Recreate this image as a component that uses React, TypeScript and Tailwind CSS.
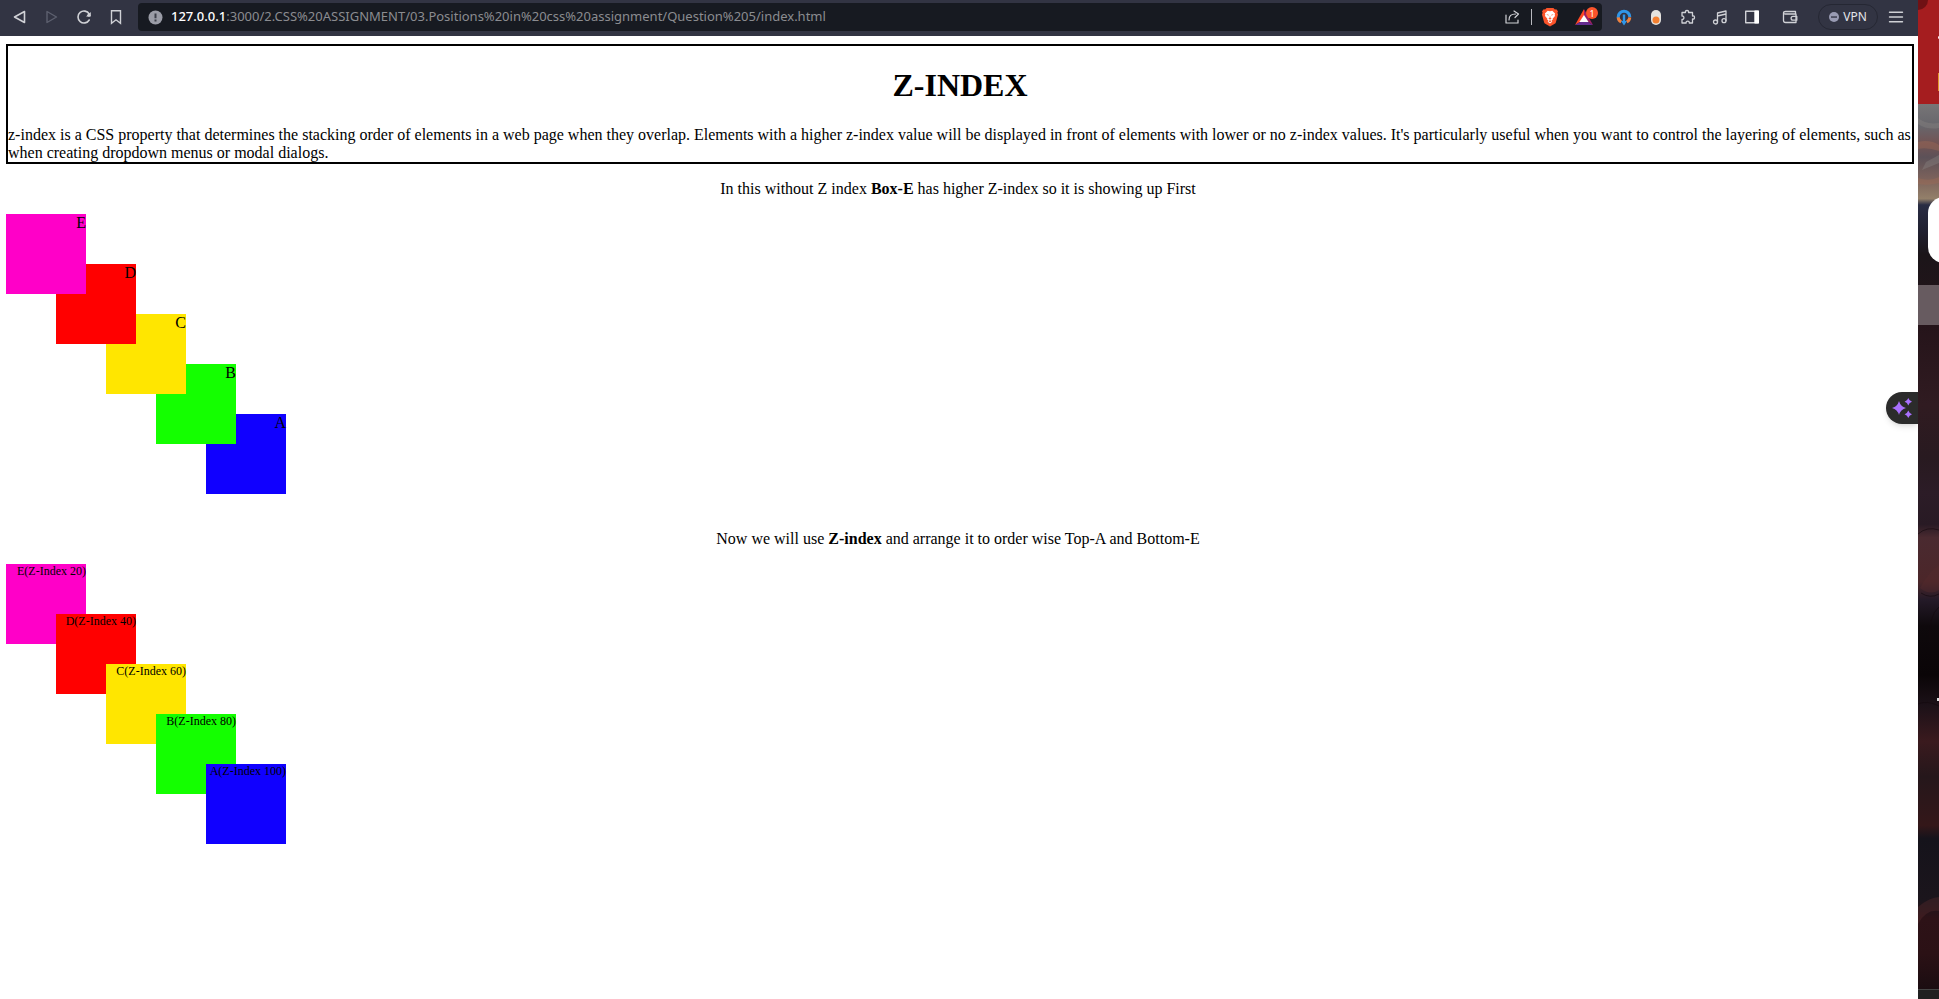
import { useState, type ReactNode } from "react";

const BOXES = [
  { name: "A", color: "bg-[#1000ff]", place: "left-[200px] top-[200px]", index: 100, layer: "z-[100]" },
  { name: "B", color: "bg-[#14ff00]", place: "left-[150px] top-[150px]", index: 80, layer: "z-[80]" },
  { name: "C", color: "bg-[#ffe600]", place: "left-[100px] top-[100px]", index: 60, layer: "z-[60]" },
  { name: "D", color: "bg-[#ff0000]", place: "left-[50px] top-[50px]", index: 40, layer: "z-40" },
  { name: "E", color: "bg-[#ff00c8]", place: "left-0 top-0", index: 20, layer: "z-20" },
];

function ToolButton({ label, children, disabled }: { label: string; children: ReactNode; disabled?: boolean }) {
  return (
    <button
      type="button"
      aria-label={label}
      disabled={disabled}
      className="flex h-7 w-8 shrink-0 items-center justify-center text-[#d0d1d6] disabled:text-[#5d606f]"
    >
      {children}
    </button>
  );
}

function Stroke({ children, w = 1.4 }: { children: ReactNode; w?: number }) {
  return (
    <svg width="16" height="16" viewBox="0 0 16 16" fill="none" stroke="currentColor" strokeWidth={w} strokeLinejoin="round" strokeLinecap="round">
      {children}
    </svg>
  );
}

function BraveLion() {
  return (
    <svg width="18" height="20" viewBox="0 0 18 20">
      <path d="M5.6 1h6.8l1.5 1.6 1.4-.3 1.7 2-.6 1.5.6 1.8-2.1 7.6q-.3 1-1.2 1.6L9 19.400l-4.700-2.600q-.9-.6-1.200-1.600L1 7.600l.6-1.800L1 4.300l1.700-2 1.400.3z" fill="#fb542b" />
      <path d="M9 4.200l2.300-.5 2.800 2.900-.4 1.200.3 1.100-2.400 2.900.2 1-1.300.7.8 1.300L9 16.600l-2.300-1.800.8-1.300-1.300-.7.200-1L4 8.900l.3-1.100-.4-1.200 2.800-2.900z" fill="#fff" />
      <path d="M5.300 7.300l2.300.5-.2 1zM12.700 7.300l-2.300.5.200 1zM9 8.500l.5 2.400 1.200.8L9 12.600l-1.700-.9 1.200-.8zM7.400 14.200L9 13.300l1.600.9L9 15.200z" fill="#fb542b" />
    </svg>
  );
}

function RewardsTriangle() {
  return (
    <svg width="20" height="18" viewBox="0 0 20 18">
      <path d="M10 1L1 17l5-3 4-6z" fill="#ff4724" />
      <path d="M1 17h18l-4.500-3H6z" fill="#662d91" />
      <path d="M10 1l9 16-4.500-3L10 8z" fill="#9e1f63" />
      <path d="M10 7L14.600 14H5.400z" fill="#fff" />
    </svg>
  );
}

function Toolbar() {
  const [path, setPath] = useState(
    ":3000/2.CSS%20ASSIGNMENT/03.Positions%20in%20css%20assignment/Question%205/index.html"
  );
  return (
    <header className="flex h-9 items-center bg-[#323443] pr-1.5 pb-0.5 pl-1 font-['Noto_Sans','Open_Sans',sans-serif]">
      <ToolButton label="Back">
        <Stroke w={1.6}><path d="M12.500 2.500v11L2.500 8z" /></Stroke>
      </ToolButton>
      <ToolButton label="Forward" disabled>
        <Stroke w={1.4}><path d="M3 2.500v11L12.500 8z" /></Stroke>
      </ToolButton>
      <ToolButton label="Reload">
        <Stroke w={1.600}>
          <path d="M13.200 5A6 6 0 1 0 13.200 11" />
          <path d="M14.800 3v4.500H10z" fill="currentColor" stroke="none" />
          <circle cx="12.800" cy="6.200" r="1.500" fill="currentColor" stroke="none" />
        </Stroke>
      </ToolButton>
      <ToolButton label="Bookmark this tab">
        <Stroke><path d="M3.500 1.700h9v12.600L8 10.800l-4.500 3.500z" strokeLinejoin="miter" /></Stroke>
      </ToolButton>

      <div className="ml-1.5 flex h-7 min-w-0 flex-1 items-center rounded-[4px] bg-[#171a21] pr-0.5 pl-2.5 text-[13px]">
        <button type="button" aria-label="View site information" className="mr-2 shrink-0">
          <svg width="15" height="15" viewBox="0 0 15 15">
            <circle cx="7.500" cy="7.500" r="7" fill="#9a9ca6" />
            <path d="M6.500 3.500h2v4.700h-2zM6.500 9.500h2v2h-2z" fill="#3c3f49" />
          </svg>
        </button>
        <label htmlFor="address" className="font-medium text-white">127.0.0.1</label>
        <input
          id="address"
          value={path}
          onChange={(e) => setPath(e.target.value)}
          spellCheck={false}
          className="min-w-0 flex-1 bg-transparent text-[#8b8c90] outline-none"
        />
        <ToolButton label="Share this page">
          <Stroke w={1.2}>
            <path d="M1 6v8h12v-3M4 11q0-6 6.500-6M9 2l4.500 3-3.500 3.500" />
          </Stroke>
        </ToolButton>
        <span className="mx-0.5 h-4 w-px bg-[#b9bac0]" />
        <ToolButton label="Brave Shields"><BraveLion /></ToolButton>
        <button type="button" aria-label="Brave Rewards" className="relative ml-0.5 flex h-7 w-8 items-center justify-center">
          <RewardsTriangle />
          <span className="absolute top-1 right-0.5 flex size-3 items-center justify-center rounded-full bg-[#fb542b] text-[9px] leading-none text-white">1</span>
        </button>
      </div>

      <div className="flex items-center pl-1.5">
        <ToolButton label="Download manager">
          <svg width="16" height="17" viewBox="0 0 16 17" fill="none">
            <path d="M3.500 11.500A5.900 5.900 0 0 1 2.200 8 5.800 5.800 0 0 1 13.800 8" stroke="#2f96e8" strokeWidth="3" />
            <path d="M2.200 8.300a6 6 0 0 0 3 4.700M13.800 8.300a6 6 0 0 1-3 4.700" stroke="#f0803c" strokeWidth="3" />
            <path d="M6.800 5.500h2.400V12h1.800L8 16.500 5 12h1.800z" fill="#2f96e8" />
          </svg>
        </ToolButton>
        <ToolButton label="Dark mode switch">
          <svg width="12" height="17" viewBox="0 0 12 17">
            <rect x="1" y="1" width="10" height="15" rx="5" fill="#e5e3df" />
            <circle cx="6" cy="11" r="3.500" fill="#f48031" />
          </svg>
        </ToolButton>
        <ToolButton label="Extensions">
          <Stroke w={1.300}>
            <path d="M2 3.500h3.500q-.5-2 1.500-2t1.500 2h4v3.500q2-.5 2 1.500t-2 1.500v4H9.300q.2-1.800-1.600-1.800T6.100 14H2v-3.600q1.900.1 1.900-1.700T2 7z" />
          </Stroke>
        </ToolButton>
        <ToolButton label="Media controls">
          <Stroke w={1.300}>
            <path d="M5.500 13V4l8.500-2v9.500M5.500 7L14 5" />
            <circle cx="3.500" cy="13" r="2" />
            <circle cx="12" cy="11.700" r="2" />
          </Stroke>
        </ToolButton>
        <ToolButton label="Sidebar">
          <Stroke>
            <rect x="1.700" y="2.200" width="12.600" height="11.600" />
            <path d="M11 2.200h3.300v11.600H11z" fill="#fff" stroke="#fff" />
          </Stroke>
        </ToolButton>
      </div>
      <div className="flex items-center pl-1.5">
        <ToolButton label="Wallet">
          <Stroke w={1.300}>
            <path d="M13.500 5V2.500h-10q-2 0-2 1.300T3.500 5H14v8.500H3.500q-2 0-2-2V4" />
            <path d="M14.800 7.400H11a1.900 1.900 0 0 0 0 3.800h3.800z" />
          </Stroke>
        </ToolButton>
      </div>
      <button type="button" className="mr-0.5 ml-3 flex h-[26px] w-[60px] shrink-0 items-center justify-center gap-1 rounded-full border border-[#252733] text-xs text-[#e4e5ea]">
        <svg width="10" height="10" viewBox="0 0 10 10">
          <circle cx="5" cy="5" r="5" fill="#999bb3" />
          <path d="M2 4.300h6v1.500H2z" fill="#3b3d4e" />
        </svg>
        VPN
      </button>
      <ToolButton label="Menu">
        <Stroke><path d="M1.500 3.200h13M1.500 8h13M1.500 12.800h13" /></Stroke>
      </ToolButton>
    </header>
  );
}

function Stack({ layered }: { layered?: boolean }) {
  return (
    <div className="relative isolate h-[300px]">
      {BOXES.map((b) => (
        <div
          key={b.name}
          className={`absolute size-20 text-right ${b.color} ${b.place} ${layered ? `${b.layer} text-xs leading-[14px]` : "text-base leading-[18px]"}`}
        >
          {layered ? `${b.name}(Z-Index ${b.index})` : b.name}
        </div>
      ))}
    </div>
  );
}

function DesktopEdge() {
  return (
    <aside className="relative flex w-[21px] shrink-0 flex-col overflow-hidden bg-[#1d0e13]">
      <div className="relative h-[104px] overflow-hidden bg-[#a51d1f]">
        <span className="absolute -top-2.5 -left-2.5 size-5 rounded-full bg-[#701114]" />
        <span className="absolute top-9 -right-0.5 size-[3px] rounded-full bg-white" />
        <span className="absolute top-[73px] right-0 h-[18px] w-px bg-[#e09a2c]" />
      </div>
      <div className="relative flex-1">
        <svg className="absolute inset-0 h-full w-full" viewBox="0 0 21 885" preserveAspectRatio="none">
          <defs>
            <linearGradient id="dusk" x1="0" y1="0" x2="0" y2="885" gradientUnits="userSpaceOnUse">
              <stop offset="0" stopColor="#777577" />
              <stop offset=".025" stopColor="#67666c" />
              <stop offset=".045" stopColor="#735353" />
              <stop offset=".06" stopColor="#5c5158" />
              <stop offset=".085" stopColor="#7c625b" />
              <stop offset=".107" stopColor="#93806a" />
              <stop offset=".114" stopColor="#292c43" />
              <stop offset=".145" stopColor="#20202f" />
              <stop offset=".17" stopColor="#1b1519" />
              <stop offset=".25" stopColor="#25141a" />
              <stop offset=".34" stopColor="#301b21" />
              <stop offset=".4" stopColor="#281a20" />
              <stop offset=".44" stopColor="#2c1c27" />
              <stop offset=".475" stopColor="#281a24" />
              <stop offset=".49" stopColor="#4a2a30" />
              <stop offset=".54" stopColor="#4b2629" />
              <stop offset=".56" stopColor="#241a28" />
              <stop offset=".59" stopColor="#0e090c" />
              <stop offset=".645" stopColor="#0a0507" />
              <stop offset=".68" stopColor="#1c1118" />
              <stop offset=".72" stopColor="#3a1a1e" />
              <stop offset=".76" stopColor="#25171b" />
              <stop offset=".815" stopColor="#341719" />
              <stop offset=".83" stopColor="#15131b" />
              <stop offset=".9" stopColor="#1b151c" />
              <stop offset=".92" stopColor="#2d1217" />
              <stop offset=".96" stopColor="#2b1115" />
              <stop offset="1" stopColor="#1b0d11" />
            </linearGradient>
          </defs>
          <rect width="21" height="885" fill="url(#dusk)" />
          <path d="M0 14q8 7 21 5v5q-12 2-21-4zM8 58l13-7v8L4 66z" fill="#8a8583" opacity=".4" />
          <path d="M0 38q12-3 21 3v6Q9 43 0 45zM0 74q12 4 21-1v6q-10 3-21 1z" fill="#a06c56" opacity=".4" />
          <path d="M2 484q10-18 19-23v25q-9 6-19-2zM0 875v-72q12-10 21-10v14Q8 805 0 820z" fill="#542a2e" opacity=".4" />
          <path d="M0 430q9-8 21-4M3 489q9 6 18 1M21 503q-11 9-9 35M0 600q9-4 21 2" stroke="#12090e" fill="none" opacity=".6" />
        </svg>
        <div className="absolute top-[93px] left-2.5 h-[66px] w-10 rounded-2xl bg-white" />
        <div className="absolute inset-x-0 top-[181px] h-10 bg-[#675b60]" />
        <span className="absolute top-[594px] right-0 h-[3px] w-0.5 bg-[#ddd]" />
      </div>
      <div className="h-2.5 border-t border-[#444] bg-[#202020]" />
    </aside>
  );
}

export default function App() {
  return (
    <div className="flex min-h-screen bg-white text-black">
      <div className="relative flex min-w-0 flex-1 flex-col overflow-hidden">
        <Toolbar />
        <main className="mt-2 mr-2 ml-1.5 font-['Liberation_Serif',serif] text-base leading-[18px]">
          <section className="-mr-1 border-2 border-black pt-[21px]">
            <h1 className="mb-[22px] text-center text-[32px] leading-[37px] font-bold">Z-INDEX</h1>
            <p>
              z-index is a CSS property that determines the stacking order of elements in a web page when they overlap.
              Elements with a higher z-index value will be displayed in front of elements with lower or no z-index
              values. It's particularly useful when you want to control the layering of elements, such as when creating
              dropdown menus or modal dialogs.
            </p>
          </section>
          <p className="my-4 text-center">
            In this without Z index <b>Box-E</b> has higher Z-index so it is showing up First
          </p>
          <Stack />
          <p className="my-4 text-center">
            Now we will use <b>Z-index</b> and arrange it to order wise Top-A and Bottom-E
          </p>
          <Stack layered />
        </main>
        <button
          type="button"
          aria-label="Open assistant"
          className="absolute top-[392px] right-0 flex h-8 w-8 items-center rounded-l-full bg-[#2b2b2b] pl-1.5 shadow-md"
        >
          <svg width="20" height="20" viewBox="0 0 20 20" fill="#a970ff">
            <path d="M7 3q1.500 5.500 7 7-5.500 1.500-7 7-1.500-5.500-7-7 5.500-1.500 7-7zM16.300 0q.9 2.800 3.700 3.700-2.800.9-3.700 3.700-.9-2.800-3.700-3.700Q15.400 2.800 16.300 0zM16.300 12.600q.9 2.800 3.700 3.700-2.800.9-3.700 3.700-.9-2.800-3.700-3.700 2.800-.9 3.700-3.700z" />
          </svg>
        </button>
      </div>
      <DesktopEdge />
    </div>
  );
}
